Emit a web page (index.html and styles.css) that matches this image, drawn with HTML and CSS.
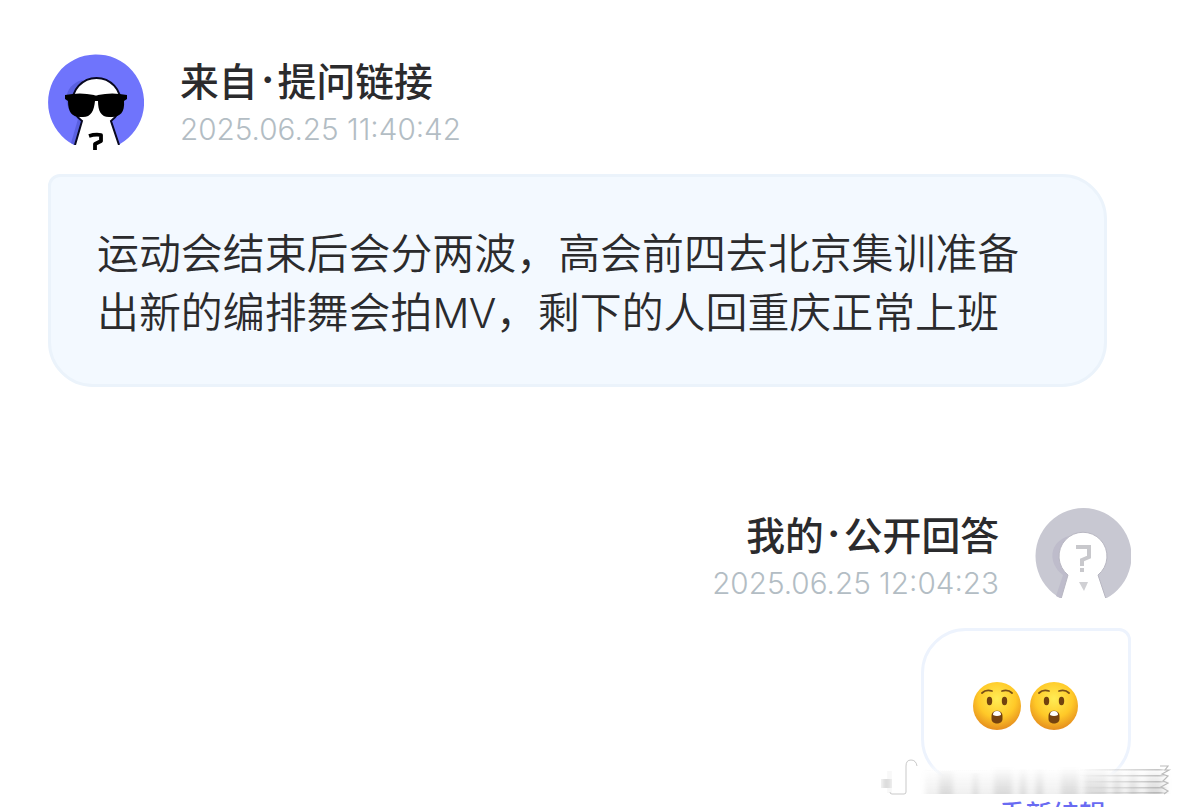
FILE: index.html
```
<!DOCTYPE html>
<html lang="zh-CN">
<head>
  <meta charset="utf-8">
  <meta name="viewport" content="width=device-width, initial-scale=1.0">
  <title>提问链接</title>
  <link rel="stylesheet" href="styles.css">
</head>
<body>
  <main class="page">
    <section class="message question">
      <div class="head">
        <svg class="avatar" viewBox="0 0 96 96">
          <path fill="#6f74fc" d="M26 91A48 48 0 1 1 72 90Z"/>
          <path fill="#5a60e0" d="M30 65C14 54 14 32 34 26L45 35 35 70 27 91 23 89Z"/>
          <path fill="#fff" stroke="#080820" stroke-width="2" d="M27 91L34 67A24 24 0 1 1 63 67L71 91"/>
          <path fill="#fff" d="M26 91h47v5H26z"/>
          <path d="M17 41Q32 38 46 41Q48 42 50 41Q64 38 79 41V45L76 47C77 58 72 63 64 63H61C53 63 50 57 50 47H47C46 57 43 63 35 63H32C24 63 20 58 20 47L17 45Z"/>
          <path fill="none" stroke="#000" stroke-width="3.800" stroke-linejoin="round" d="M41 82Q47 80 53 81V87L47 90V96"/>
        </svg>
        <div class="info">
          <h2>来自<i>·</i>提问链接</h2>
          <time>2025.06.25 11:40:42</time>
        </div>
      </div>
      <p class="bubble">运动会结束后会分两波，高会前四去北京集训准备<br>出新的编排舞会拍<span class="latin">MV</span>，剩下的人回重庆正常上班</p>
    </section>

    <section class="message answer">
      <div class="head">
        <div class="info">
          <h2>我的<i>·</i>公开回答</h2>
          <time>2025.06.25 12:04:23</time>
        </div>
        <svg class="avatar" viewBox="0 0 96 96">
          <path fill="#c8c8d2" d="M27 91A48 48 0 1 1 70 91Z"/>
          <path fill="#bebccb" d="M28 67C13 56 13 34 34 28L45 35 35 70 27 91 21 88Z"/>
          <path fill="#fff" stroke="#b8b7c2" stroke-width="1" d="M26 91L33 67A24 24 0 1 1 63 67L71 91"/>
          <path fill="#fff" d="M25 90h48v6H25z"/>
          <path fill="none" stroke="#c8c8cc" stroke-width="4" d="M41 39H54V49L47 52V58M47 60V64"/>
          <path fill="#d0d0d4" d="M44 74h9l-4 9z"/>
        </svg>
      </div>
      <div class="bubble">
        <svg class="emoji" viewBox="0 0 48 48"><use href="#face"/></svg>
        <svg class="emoji" viewBox="0 0 48 48"><use href="#face"/></svg>
      </div>
      <a class="edit">重新编辑</a>
      <svg class="smear" viewBox="0 0 300 44">
        <use href="#smear-shape"/>
      </svg>
    </section>
  </main>

  <svg class="defs">
    <defs>
      <radialGradient id="skin" cx=".5" cy=".35" r=".65">
        <stop offset="0" stop-color="#ffed55"/>
        <stop offset=".6" stop-color="#ffc928"/>
        <stop offset="1" stop-color="#e58d1e"/>
      </radialGradient>
      <linearGradient id="fade" x2="0" y2="1">
        <stop offset="0" stop-color="#fff" stop-opacity="0"/>
        <stop offset=".35" stop-color="#fff"/>
        <stop offset="1" stop-color="#fff"/>
      </linearGradient>
      <linearGradient id="bar" x2="0" y2="1">
        <stop offset="0" stop-color="#aaa" stop-opacity="0"/>
        <stop offset="1" stop-color="#aaa" stop-opacity=".5"/>
      </linearGradient>
      <linearGradient id="streak">
        <stop offset="0" stop-color="#aaa" stop-opacity="0"/>
        <stop offset="1" stop-color="#999" stop-opacity=".6"/>
      </linearGradient>
      <filter id="soft" x="-10%" y="-10%" width="120%" height="120%"><feGaussianBlur stdDeviation="2.500 .6"/></filter>
      <g id="face">
        <circle cx="24" cy="24" r="24" fill="url(#skin)"/>
        <path fill="none" stroke="#795019" stroke-width="1.8" stroke-linecap="round" d="M9 11Q13 7 19 9M29 9Q35 7 39 11"/>
        <ellipse cx="16.500" cy="19" rx="2.700" ry="4.200" fill="#71420f"/>
        <ellipse cx="31.500" cy="19" rx="2.700" ry="4.200" fill="#71420f"/>
        <path fill="#75420f" d="M18.500 34C18.500 27 29.500 27 29.500 34V37C29.500 43 18.500 43 18.500 37Z"/>
        <path fill="#fff" d="M20 33Q20 29 24 29T28 33Q24 35 20 33Z"/>
      </g>
      <g id="smear-shape">
        <path fill="url(#fade)" d="M45 4H300V42H45Z"/>
        <g fill="url(#bar)" filter="url(#soft)">
          <path opacity=".35" d="M46 10h242v25H46z"/>
          <path opacity=".65" d="M60 12h14v23H60zM94 14h5v21h-5zM115 8h18v27h-18zM141 10h6v25h-6zM157 10h7v25h-7zM182 8h17v27h-17zM206 10h22v25h-22zM234 10h8v25h-8zM250 10h8v25h-8zM268 10h14v25h-14z"/>
        </g>
        <path fill="#999" opacity=".35" filter="url(#soft)" d="M3 20h9v9H3z"/>
        <path fill="none" stroke="#bbb" stroke-opacity=".8" d="M11 33q0 2 2 2h12q2 0 2-2V7q0-6 5-6t6 6"/>
        <path fill="#ddd" opacity=".5" filter="url(#soft)" d="M9 12h3v22H9z"/>
        <path fill="url(#streak)" filter="url(#soft)" d="M200 10h84v1.500h-84zM200 16h84v1.500h-84zM200 22h84v1.500h-84zM200 28h84v1.500h-84zM200 33h84v1.500h-84z"/>
        <path fill="none" stroke="#bbb" stroke-width="1.200" d="M281 7h8l-3 4h4l-7 4 6 2-5 5 5 2-7 4 7 4-4 3"/>
      </g>
    </defs>
  </svg>
</body>
</html>
```
FILE: styles.css
```
body {
  margin: 0;
  background: #fff;
  color: #2b2b2d;
  font-family: "Inter", "Noto Sans CJK SC", sans-serif;
}
.page {
  box-sizing: border-box;
  height: 807px;
  padding: 54px 48px 0;
  overflow: hidden;
}
.message {
  display: flex;
  flex-direction: column;
}
.head {
  display: flex;
  gap: 36px;
  height: 96px;
}
.avatar {
  width: 96px;
  height: 96px;
  flex: none;
}
.info {
  display: flex;
  flex-direction: column;
}
h2 {
  display: flex;
  margin: 0;
  font: 500 38.8px/50px "Noto Sans CJK SC", sans-serif;
  white-space: nowrap;
}
h2 i {
  width: 20px;
  font-family: "Inter", sans-serif;
  font-style: normal;
  font-weight: 700;
  text-align: center;
}
time {
  padding-top: 3px;
  color: #b3bdc4;
  font: 350 29.7px/44px "Inter", sans-serif;
  white-space: nowrap;
}
.bubble {
  box-sizing: border-box;
  border: 3px solid #ebf3fb;
}
.question .bubble {
  width: 1059px;
  height: 213px;
  margin: 24px 0 0;
  padding: 44px 0 0 46px;
  border-radius: 12px 45px 45px 45px;
  background: #f3f9ff;
  font: 350 41.93px/59px "Noto Sans CJK SC", sans-serif;
  white-space: nowrap;
}
.latin {
  font-family: "Inter", sans-serif;
  font-size: 41px;
  letter-spacing: -0.5px;
}
.answer {
  position: relative;
  align-items: flex-end;
  margin-top: 121px;
}
.answer .info {
  align-items: flex-end;
}
.answer .bubble {
  display: flex;
  gap: 9px;
  width: 210px;
  height: 156px;
  margin-top: 24px;
  padding: 51px 0 0 48.5px;
  border-color: #edf3fd;
  border-radius: 45px 12px 45px 45px;
}
.emoji {
  width: 48px;
  height: 48px;
}
.edit {
  margin: 14px 25px 0 0;
  color: #696bf2;
  font: 500 26.8px/32px "Noto Sans CJK SC", sans-serif;
}
.smear {
  position: absolute;
  top: 251px;
  right: -48px;
  width: 300px;
  height: 44px;
}
.defs {
  position: absolute;
  width: 0;
  height: 0;
}
```
